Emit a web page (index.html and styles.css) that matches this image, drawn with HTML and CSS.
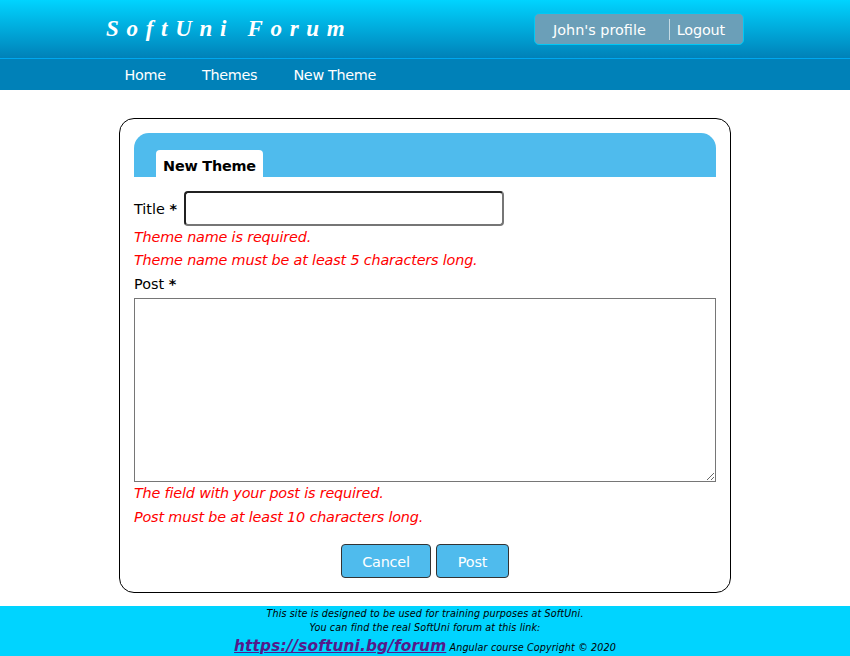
FILE: index.html
```html
<!DOCTYPE html>
<html lang="en"><head><meta charset="utf-8"><title>SoftUni Forum</title><link rel="stylesheet" href="styles.css"></head>
<body>
<header class="top"><h1 class="logo">SoftUni Forum</h1><div class="profile"><a>John's profile</a><a class="logout">Logout</a></div></header>
<nav class="nav"><a>Home</a><a>Themes</a><a>New Theme</a></nav>
<main class="card">
<div class="tabs"><h2 class="tab">New Theme</h2></div>
<form>
<div class="title-row"><label for="title">Title <b>*</b></label><input id="title" class="title-input"></div>
<div class="title-errors"><p class="error">Theme name is required.</p>
<p class="error">Theme name must be at least 5 characters long.</p></div>
<label class="post-label" for="post">Post <b>*</b></label>
<textarea id="post" class="post"></textarea>
<p class="error">The field with your post is required.</p>
<p class="error">Post must be at least 10 characters long.</p>
<div class="buttons"><button type="button">Cancel</button><button type="button" class="submit">Post</button></div>
</form>
</main>
<footer class="footer"><p>This site is designed to be used for training purposes at SoftUni.</p><p>You can find the real SoftUni forum at this link:</p><p class="last"><a>https://softuni.bg/forum</a> <span>Angular course Copyright © 2020</span></p></footer>
</body></html>
```
FILE: styles.css
```css
*{box-sizing:border-box;margin:0;padding:0}
body{height:656px;display:flex;flex-direction:column;font:14.4px Verdana,"DejaVu Sans",sans-serif;color:#000;background:#fff}
.top{height:58px;flex:none;padding:13px 106px 0;display:flex;justify-content:space-between;background:linear-gradient(#00d4ff,#0081b8);color:#fff}
.logo{font:italic bold 23px/32px "Brush Script MT","Liberation Serif",cursive;letter-spacing:7.7px;white-space:nowrap}
.profile{width:210px;height:32px;display:flex;align-items:center;padding:2px 0 0 18px;background:#6b9fb8;border:1px solid #00c8f5;border-radius:5px;letter-spacing:0}
.logout{margin:-2px 0 0 23px;padding:2px 0 0 7px;border-left:1px solid #c4dae4;line-height:19px;letter-spacing:-.2px}
.nav{height:32px;flex:none;border-top:1px solid #00a8f0;background:#0081b8;color:#fff;display:flex;gap:36.3px;padding-left:124.5px;line-height:32px;letter-spacing:-.33px}
.card{width:612px;height:475px;margin:28px auto 13px;border:1px solid #000;border-radius:15px;padding:14px}
.tabs{height:44px;border-radius:15px 15px 0 0;background:#4fbbed;padding:17px 22px 0}
.tab{width:107px;height:27px;background:#fff;border-radius:4px 4px 0 0;text-align:center;font-size:14.4px;line-height:32px;letter-spacing:-.2px}
.title-row{display:flex;align-items:center;margin-top:14px;height:35px}
.title-input{width:320px;height:35px;margin-left:7px;border:2px inset #767676;border-radius:4px}
.error{font-style:italic;color:red;line-height:23.5px;letter-spacing:-.18px}
.title-errors .error{line-height:23px}
.post-label{display:block;line-height:24px;padding-bottom:2px}
.post{display:block;width:582px;height:184px;border:1px solid #767676}
.buttons{display:flex;justify-content:center;gap:5px;margin-top:15px}
button{width:90px;height:34px;padding-top:1px;border:1px solid #333;border-radius:4px;background:#4fbbed;color:#fff;font:inherit;letter-spacing:-.2px}
.submit{width:73px}
.footer{height:50px;flex:none;background:#00d4ff;text-align:center;font-style:italic;font-size:9.6px;line-height:14px;padding-top:1px;letter-spacing:.13px}
.last{line-height:22px}
.last a{font-size:15.36px;font-weight:bold;color:#551a8b;text-decoration:underline}
```
